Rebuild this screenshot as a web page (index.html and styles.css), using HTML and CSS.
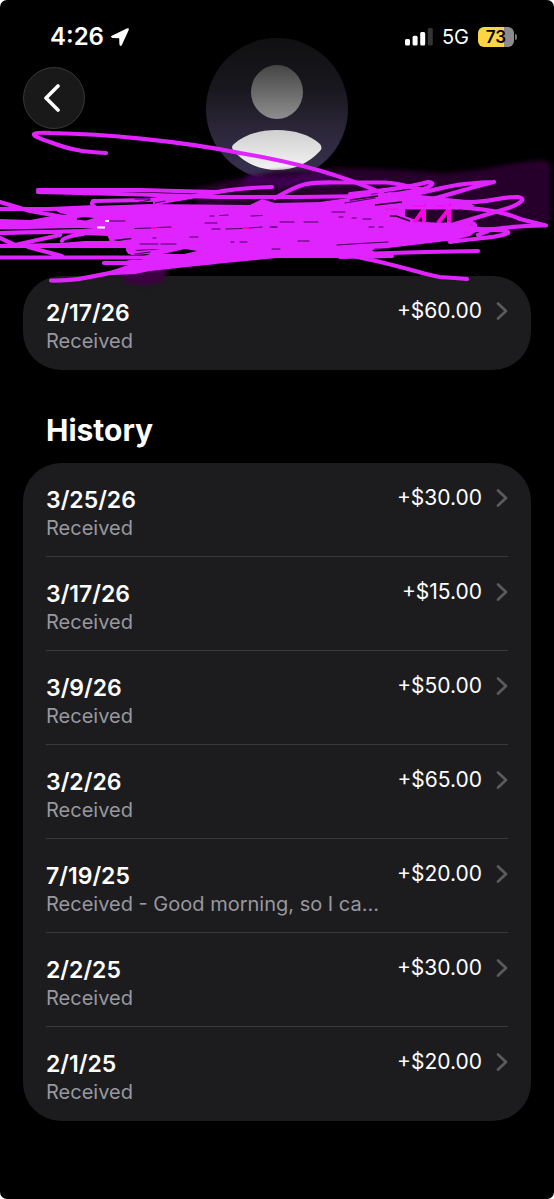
FILE: index.html
```html
<!DOCTYPE html>
<html lang="en">
<head>
<meta charset="utf-8">
<meta name="viewport" content="width=device-width, initial-scale=1">
<title>Transaction history</title>
<link rel="stylesheet" href="styles.css">
</head>
<body>
<svg class="defs" width="0" height="0" aria-hidden="true">
  <symbol id="chevron" viewBox="0 0 12 20"><path d="M2 2.5 10 10 2 17.5" fill="none" stroke="currentColor" stroke-width="2.7" stroke-linecap="round" stroke-linejoin="round"/></symbol>
</svg>
<div class="screen">
  <header class="hero">
    <div class="status">
      <div class="status-side">
        <time class="clock">4:26</time>
        <svg class="location" viewBox="0 0 20 20" aria-hidden="true"><path d="M1.8 8.8 16.8 1.4Q19.6.4 18.6 3.2L12 17.8Q10.4 20.4 9.4 17.6L9.2 11.2 2.6 11Q-.2 10.2 1.8 8.8Z" fill="#fff"/></svg>
      </div>
      <div class="status-side status-right">
        <svg class="signal" viewBox="0 0 28 18" aria-hidden="true"><rect x="0" y="11" width="5" height="6.5" rx="1.5" fill="#fff"/><rect x="7.6" y="7.7" width="5" height="9.8" rx="1.5" fill="#fff"/><rect x="15.2" y="4" width="5" height="13.5" rx="1.5" fill="#fff"/><rect x="22.8" y="0" width="5" height="17.5" rx="1.5" fill="#343434"/></svg>
        <span class="network">5G</span>
        <div class="battery"><span class="battery-body">73</span><span class="battery-tip"></span></div>
      </div>
    </div>
    <button class="back" type="button" aria-label="Back"><svg viewBox="0 0 18 28" aria-hidden="true"><path d="M15 2 3 14l12 12" fill="none" stroke="#fff" stroke-width="3.6" stroke-linecap="round" stroke-linejoin="round"/></svg></button>
    <svg class="avatar" viewBox="0 0 142 142" role="img" aria-label="Contact">
      <defs>
        <linearGradient id="disc" x2="0" y2="1"><stop offset="0" stop-color="#101012"/><stop offset=".35" stop-color="#18171d"/><stop offset=".65" stop-color="#2c2639"/><stop offset="1" stop-color="#3a3254"/></linearGradient>
        <linearGradient id="head" x2="0" y2="1"><stop offset="0" stop-color="#454545"/><stop offset="1" stop-color="#8e8e8e"/></linearGradient>
        <linearGradient id="body" x2="0" y2="1"><stop offset="0" stop-color="#cfcfcf"/><stop offset="1" stop-color="#f4f4f4"/></linearGradient>
      </defs>
      <circle cx="71" cy="71" r="71" fill="url(#disc)"/>
      <ellipse cx="71" cy="54" rx="26" ry="27" fill="url(#head)"/>
      <path d="M28 106C38 97 53 92 71 92s33 5 43 14q3 4 0 7c-11 12-26 19-43 19s-33-7-43-19q-4-4 0-7Z" fill="url(#body)"/>
    </svg>
  </header>

  <main class="content">
    <section class="card" aria-label="Latest">
      <a class="row" href="#"><span class="info"><span class="date">2/17/26</span><span class="note">Received</span></span><span class="amount">+$60.00</span><svg class="chevron" aria-hidden="true"><use href="#chevron"/></svg></a>
    </section>
    <h1 class="title">History</h1>
    <section class="card" aria-label="History">
      <a class="row" href="#"><span class="info"><span class="date">3/25/26</span><span class="note">Received</span></span><span class="amount">+$30.00</span><svg class="chevron" aria-hidden="true"><use href="#chevron"/></svg></a>
      <a class="row" href="#"><span class="info"><span class="date">3/17/26</span><span class="note">Received</span></span><span class="amount">+$15.00</span><svg class="chevron" aria-hidden="true"><use href="#chevron"/></svg></a>
      <a class="row" href="#"><span class="info"><span class="date">3/9/26</span><span class="note">Received</span></span><span class="amount">+$50.00</span><svg class="chevron" aria-hidden="true"><use href="#chevron"/></svg></a>
      <a class="row" href="#"><span class="info"><span class="date">3/2/26</span><span class="note">Received</span></span><span class="amount">+$65.00</span><svg class="chevron" aria-hidden="true"><use href="#chevron"/></svg></a>
      <a class="row" href="#"><span class="info"><span class="date">7/19/25</span><span class="note">Received - Good morning, so I ca...</span></span><span class="amount">+$20.00</span><svg class="chevron" aria-hidden="true"><use href="#chevron"/></svg></a>
      <a class="row" href="#"><span class="info"><span class="date">2/2/25</span><span class="note">Received</span></span><span class="amount">+$30.00</span><svg class="chevron" aria-hidden="true"><use href="#chevron"/></svg></a>
      <a class="row" href="#"><span class="info"><span class="date">2/1/25</span><span class="note">Received</span></span><span class="amount">+$20.00</span><svg class="chevron" aria-hidden="true"><use href="#chevron"/></svg></a>
    </section>
  </main>

  <svg class="scribble" viewBox="0 0 554 300" aria-hidden="true">
    <defs><filter id="soft" x="-10%" y="-20%" width="120%" height="140%"><feGaussianBlur stdDeviation="2"/></filter></defs>
    <g filter="url(#soft)">
      <path d="M195 188 240 178 277 171 350 168 400 170 445 173 485 169 515 163 540 160Q552 161 551 170L551 222 505 234 400 240 200 240Z" fill="#28002a"/>
      <path d="M250 173Q277 183 315 171L335 178V186H240Z" fill="#4b006d" opacity=".6"/>
      <path d="M120 264H170L163 281Q145 288 125 282Z" fill="#3d0043"/>
    </g>
    <!-- solid core of overlapping strokes -->
    <path d="M0 219 30 220 62 214 50 208 92 206 150 204 250 205 262 199 275 203 320 202 355 197 390 192 430 196 465 200 475 206 468 209 405 208 405 220 445 224 470 224 478 230 470 236 455 240 405 246 372 250 380 257 345 258 277 258 215 264 150 271 135 274 95 276 128 265 105 265 135 259 150 254 128 254 126 248 110 248 0 248 0 244 60 243 85 241 110 240 108 236 83 235 62 232 0 235Z" fill="#e024ff"/>
    <!-- gaps left between strokes -->
    <g fill="#050006">
      <path d="M0 229.500 80 228 94 229 0 231Z"/>
      <path d="M52 216 62 213.500 76 217 62 218ZM70 219 84 217 94 218 86 220.500Z"/>
      <path d="M63 241 70 236 84 236 108 238 110 241 90 241Z"/>
      <path d="M113 240 130 238 132 239 118 241ZM128 259 150 257 140 260Z"/>
      <path d="M163 254 185 249 197 251 184 254ZM135 250 160 249 140 252Z"/>
    </g>
    <g fill="none" stroke="#e024ff" stroke-width="4.200" stroke-linecap="round" stroke-linejoin="round">
      <path d="M106 153C82 152 68 149 50 142 26 134 31 132 51 133 105 134 180 141 240 153 305 164 342 176 382 193"/>
      <path d="M38 190 140 190 215 192M38 192 140 194.500 215 197 300 197 370 196"/>
      <path d="M272 187C235 188 215 192 185 198L155 203M93 202Q90 203 96 209M93 201 150 200 175 197"/>
      <path d="M0 202 30 211 75 219M0 209 50 209 95 207M0 224 45 222 95 210"/>
      <path d="M0 233 50 232 95 231M0 238 15 245M15 245 60 235M28 247 62 256M0 257.500H150"/>
      <path d="M62 241Q62 237 83 234M110 236 112 241M128 250 132 253 150 252"/>
      <path d="M51 280.500C80 281 92 276 125 270L215 262"/>
      <path d="M104 263H140"/>
      <path d="M340 257 392 256M355 254 425 252 478 251M345 255C390 262 425 275 440 277Q455 278 467 279"/>
      <path d="M275 198C300 184 306 182 335 182.500H385C403 183 412 189 425 190"/>
      <path d="M350 194C390 190 415 186 428 182 437 182 432 188 414 191L355 201"/>
      <path d="M494 182C455 183 445 188 405 196M494 182C465 189 452 194 432 199"/>
      <path d="M400 200 470 202C490 202 500 197 517 197 530 198 517 206 502 210L455 224"/>
      <path d="M400 207C450 206 495 207 520 219L546 225.500C500 225 503 232 470 228"/>
      <path d="M455 224Q477 220 475 227L450 231M478 235 488 231M462 231C500 228 510 231 508 233 500 238 475 238 450 242"/>
      <path d="M380 209 415 222"/>
    </g>
    <g fill="none" stroke="#ff00e6" stroke-width="4">
      <path d="M414 223 424 209V223M438 223 449 209V223"/>
    </g>
    <g fill="none" stroke="#e024ff" stroke-width="3"><path d="M405 208H458M405 224H462"/></g>
    <path d="M412 206H424M436 206H445M385 209H398" stroke="#ff00e6"/>
    <path d="M390 216 396 216 410 221M375 205 402 202M350 200 378 196" fill="none" stroke="#28002a" stroke-width="1.600"/>
    <g fill="none" stroke="#4b0060" stroke-width="1.200" stroke-linecap="round">
      <path d="M110 221H125M135 228.500 151 228M157 227.500 171 227"/>
      <path d="M210 216H214M220 215.500 228 215M251 216 262 215.500M205 223H217M212 229H220M226 229 242 228.500M249 228 262 227M272 227H277"/>
      <path d="M280 222H294M304 222H318M270 227H276M332 212H345M339 217H343M352 218H356M363 219H371M369 227H374M379 227H383"/>
      <path d="M190 237H198M153 238H156M161 244H176M231 242H234M240 242H247M298 241H309M337 245 360 243.500 388 242M272 249H280M375 249 390 249"/>
      <path d="M135 203 150 200M155 203 165 201M135 199H150M135 254 150 252M140 244H158M345 203 375 198"/>
    </g>
    <path d="M105 221H109M97 227.500H105" stroke="#fff" stroke-width="2"/>
    <path d="M152 228H156M243 228H249" stroke="#ff00c0" stroke-width="2"/>
  </svg>
</div>
</body>
</html>
```

FILE: styles.css
```css
* { box-sizing: border-box; }
html { background: #fff; }
body {
  margin: 0;
  color: #fff;
  font-family: Inter, "Liberation Sans", sans-serif;
}
.defs { display: none; }
.screen {
  position: relative;
  min-height: 100vh;
  overflow: hidden;
  background: #000;
  border-radius: 7px;
}

.hero {
  display: grid;
  grid-template-columns: 1fr 142px 1fr;
  grid-template-rows: 67px auto;
  padding: 0 23px;
}
.status {
  grid-area: 1 / 1 / 2 / 4;
  display: flex;
  justify-content: space-between;
  align-items: flex-start;
  padding: 24px 14px 0 27px;
}
.status-side {
  display: flex;
  align-items: center;
  gap: 6px;
  height: 26px;
}
.clock { font-size: 24px; font-weight: 600; line-height: 26px; }
.location { width: 20px; height: 20px; }
.status-right { gap: 9px; }
.signal { width: 28px; height: 18px; }
.network { font-size: 20px; font-weight: 400; line-height: 26px; }
.battery { display: flex; align-items: center; gap: 1px; }
.battery-body {
  width: 36px;
  height: 20px;
  border-radius: 6px;
  background: linear-gradient(90deg, #fbd543 73%, #8b8b8b 73%);
  color: #000;
  font-size: 17px;
  font-weight: 600;
  line-height: 20px;
  text-align: center;
}
.battery-tip { width: 2px; height: 6px; border-radius: 0 2px 2px 0; background: #777; }

.back {
  grid-area: 2 / 1;
  display: grid;
  place-items: center;
  width: 62px;
  height: 62px;
  padding: 0 5px 0 0;
  border: 1px solid #383838;
  border-radius: 50%;
  background: #191919;
}
.back svg { width: 18px; height: 28px; }
.avatar {
  grid-area: 1 / 2 / 3 / 3;
  width: 142px;
  height: 142px;
  margin-top: 38px;
}

.content { padding: 96px 23px 78px; }
.card {
  padding: 0 23px;
  border-radius: 38px;
  background: #1c1c1e;
}
.row {
  display: flex;
  align-items: flex-start;
  height: 94px;
  padding-top: 22px;
  color: inherit;
  text-decoration: none;
}
.row:not(:last-child) { border-bottom: 1px solid #39393b; }
.info { display: flex; flex: 1; flex-direction: column; min-width: 0; }
.date { font-size: 23px; font-weight: 600; line-height: 31px; }
.note { color: #98989f; font-size: 20px; line-height: 24px; white-space: nowrap; }
.amount { font-size: 21px; line-height: 26px; }
.chevron {
  flex: none;
  width: 12px;
  height: 20px;
  margin: 3px 0 0 14px;
  color: #5b5b5f;
}
.title {
  margin: 0;
  padding: 42px 23px 15px;
  font-size: 30px;
  font-weight: 700;
  line-height: 36px;
}
.scribble {
  position: absolute;
  top: 0;
  left: 0;
  width: 100%;
  pointer-events: none;
}
```
